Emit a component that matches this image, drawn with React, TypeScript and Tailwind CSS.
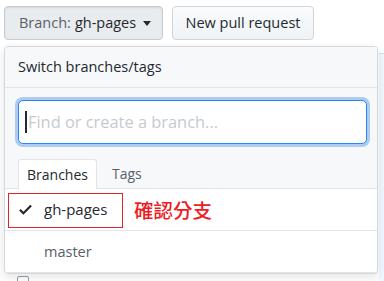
import React from "react";

export default function App() {
  const font = { fontFamily: '"Open Sans", "Noto Sans CJK TC", sans-serif' };
  return (
    <div className="relative w-[384px] h-[281px] bg-white overflow-hidden" style={font}>
      {/* background page content */}
      <div className="flex gap-[9px] pl-[4px] pt-[6px]">
        <button className="h-[34px] w-[159px] flex items-center pl-[14px] rounded-[4px] border border-[#c8cbcf] bg-[#e9ecef] text-[14.5px] shadow-[inset_0_1px_2px_rgba(27,31,35,0.1)]">
          <span className="text-[#586069]">Branch:</span>
          <span className="ml-[4px] text-[#24292e]">gh-pages</span>
          <span className="ml-[7px] w-0 h-0 border-l-[4px] border-r-[4px] border-t-[5px] border-l-transparent border-r-transparent border-t-[#24292e]" />
        </button>
        <button className="h-[34px] w-[142px] flex items-center justify-center rounded-[4px] border border-[#d1d5da] bg-gradient-to-b from-[#fafbfc] to-[#eff3f6] text-[14.5px] text-[#24292e]">
          New pull request
        </button>
      </div>
      <div className="absolute left-[379px] top-[53px] w-[10px] h-[230px] bg-[#f1f8ff] border-t border-[#c8e1ff]" />
      <div className="absolute left-[17px] top-[276px] w-[12px] h-[12px] rounded-[2px] border border-[#959da5]" />

      {/* dropdown */}
      <div className="absolute left-[4px] top-[46px] w-[374px] h-[228px] rounded-[4px] border border-[#d5d8dc] bg-white shadow-[0_3px_10px_rgba(27,31,35,0.12)] overflow-hidden flex flex-col">
        <div className="h-[41px] shrink-0 bg-[#f6f8fa] border-b border-[#e1e4e8] flex items-center pl-[13px] text-[14.5px] font-medium text-[#24292e]">
          Switch branches/tags
        </div>
        <div className="bg-[#f6f8fa] pt-[12px] px-[13px]">
          <div className="h-[44px] w-[349px] rounded-[5px] border border-[#2188ff] bg-white shadow-[0_0_0_3px_rgba(3,102,214,0.3)] flex items-center pl-[6px]">
            <span className="w-[2px] h-[22px] bg-[#24292e]" />
            <span className="ml-[1px] text-[16.4px] text-[#c6cacf]">Find or create a branch...</span>
          </div>
          <div className="mt-[14px] flex items-end">
            <div className="h-[30px] w-[79px] rounded-t-[3px] border border-b-0 border-[#e1e4e8] bg-white flex items-center justify-center text-[14px] text-[#24292e] -mb-px relative z-10">
              Branches
            </div>
            <div className="h-[30px] flex items-center pl-[15px] text-[14px] text-[#586069]">Tags</div>
          </div>
        </div>
        <div className="border-t border-[#e1e4e8]" />
        <div className="h-[42px] border-b border-[#e1e4e8] flex items-center relative">
          <div className="absolute left-[3px] top-[4px] w-[115px] h-[35px] border border-[#e0262b]" />
          <svg className="ml-[12px]" width="17" height="17" viewBox="0 0 12 16">
            <path fillRule="evenodd" fill="#24292e" d="M12 5l-8 8-4-4 1.5-1.5L4 10l6.5-6.5L12 5z" />
          </svg>
          <span className="ml-[10px] text-[15px] text-[#24292e]">gh-pages</span>
          <span className="absolute left-[129px] top-[8px] text-[19.5px] font-medium text-[#ee1c25] leading-[26px]" style={{ fontFamily: '"Noto Sans CJK TC", sans-serif' }}>確認分支</span>
        </div>
        <div className="h-[43px] border-b border-[#e1e4e8] flex items-center pl-[39px] pt-[2px] text-[14.5px] text-[#586069]">
          master
        </div>
      </div>
    </div>
  );
}
